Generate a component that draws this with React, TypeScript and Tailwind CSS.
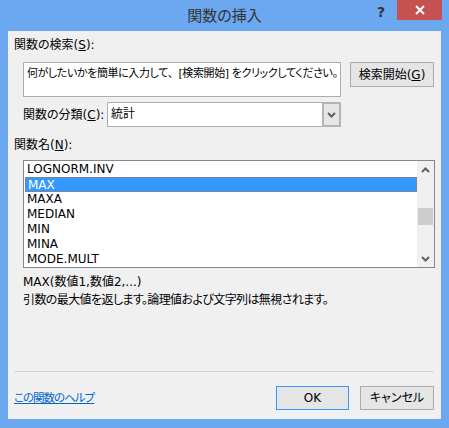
import React from 'react';

const items = ['LOGNORM.INV', 'MAX', 'MAXA', 'MEDIAN', 'MIN', 'MINA', 'MODE.MULT'];

const Chevron: React.FC<{ down?: boolean }> = ({ down }) => (
  <svg width="9" height="6" viewBox="0 0 9 6">
    <path
      d={down ? 'M1 1 L4.5 4.5 L8 1' : 'M1 5 L4.5 1.5 L8 5'}
      fill="none"
      stroke="#606060"
      strokeWidth="2"
    />
  </svg>
);

const App: React.FC = () => {
  const font = "font-['DejaVu_Sans','Noto_Sans_CJK_JP',sans-serif] [font-feature-settings:'palt']";

  return (
    <div className={`w-[449px] h-[428px] bg-[#6ba8ef] flex flex-col text-[12px] text-black ${font}`}>
      {/* title bar */}
      <div className="relative h-[31px] flex items-center justify-center">
        <span className="text-[15px] text-[#333] pb-[1px] font-['Noto_Sans_CJK_JP',sans-serif]">関数の挿入</span>
        <span className="absolute left-[377px] top-[2px] text-[14px] font-bold text-[#333]">?</span>
        <div className="absolute left-[397px] top-0 w-[45px] h-[20px] bg-[#c75050] flex items-center justify-center">
          <svg width="10" height="10" viewBox="0 0 10 10">
            <path d="M1 1 L9 9 M9 1 L1 9" stroke="#fff" strokeWidth="2" />
          </svg>
        </div>
      </div>

      {/* client */}
      <div className="mx-[8px] h-[388px] bg-[#f0f0f0] flex flex-col pl-[6px] pr-[7px]">
        <div className="mt-[6px] h-[16px] leading-[16px]">
          関数の検索(<span className="underline">S</span>):
        </div>

        <div className="mt-[9px] pl-[9px] flex items-start gap-[9px]">
          <div className="w-[318px] h-[35px] bg-white border border-[#abadb3] px-[3px] pt-[3px] leading-[16px] whitespace-nowrap overflow-hidden text-[11px] tracking-[-0.4px]">
            何がしたいかを簡単に入力して<span className="[font-feature-settings:normal]">、</span>[検索開始] をクリックしてください。
          </div>
          <button className="w-[84px] h-[25px] bg-[#e5e5e5] border border-[#acacac] leading-[16px]">
            検索開始(<span className="underline">G</span>)
          </button>
        </div>

        <div className="mt-[5px] pl-[9px] flex items-center">
          <div className="w-[84px] leading-[16px]">
            関数の分類(<span className="underline">C</span>):
          </div>
          <div className="w-[234px] h-[25px] bg-white border border-[#acacac] flex">
            <div className="flex-1 pl-[3px] leading-[23px]">統計</div>
            <div className="w-[19px] -m-px bg-[#e6e6e6] border-2 border-[#b4b4b4] flex items-center justify-center">
              <Chevron down />
            </div>
          </div>
        </div>

        <div className="mt-[10px] h-[16px] leading-[16px]">
          関数名(<span className="underline">N</span>):
        </div>

        <div className="mt-[7px] ml-[9px] w-[412px] h-[108px] bg-white border border-[#828790] flex">
          <div className="flex-1 pt-[1px] pl-[1px]">
            {items.map((it) => (
              <div
                key={it}
                className={`h-[15px] leading-[15px] pl-[2px] ${
                  it === 'MAX' ? 'bg-[#3399ff] text-white border border-dotted border-[#c0703a] pl-[1px] leading-[13px]' : ''
                }`}
              >
                {it}
              </div>
            ))}
          </div>
          <div className="w-[17px] bg-[#f0f0f0] flex flex-col items-center">
            <div className="h-[17px] flex items-center justify-center">
              <Chevron />
            </div>
            <div className="mt-[30px] w-[15px] h-[17px] bg-[#cdcdcd]" />
            <div className="mt-auto h-[17px] flex items-center justify-center">
              <Chevron down />
            </div>
          </div>
        </div>

        <div className="mt-[5px] ml-[9px] leading-[18px]">
          <div>MAX(数値1,数値2,...)</div>
          <div className="tracking-[-0.6px]">引数の最大値を返します。論理値および文字列は無視されます。</div>
        </div>

        <div className="mt-[62px] h-px bg-[#d5d5d5]" />

        <div className="mt-[14px] flex items-center">
          <a href="#" className="text-[#0066cc] underline leading-[16px] text-[11.5px] tracking-[-1px]">
            この関数のヘルプ
          </a>
          <div className="ml-auto flex gap-[11px]">
            <button className="w-[73px] h-[24px] bg-[#e5e5e5] border border-[#3399ff]">OK</button>
            <button className="w-[74px] h-[24px] bg-[#e5e5e5] border border-[#acacac]">キャンセル</button>
          </div>
        </div>
      </div>
    </div>
  );
};

export default App;
